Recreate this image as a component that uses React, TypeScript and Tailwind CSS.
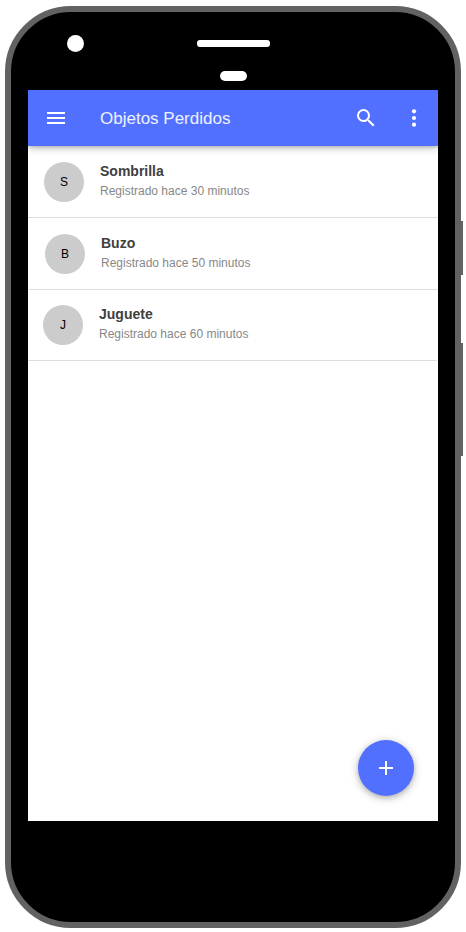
import React from "react";

interface LostItem {
  initial: string;
  name: string;
  detail: string;
  row: string;
}

const items: LostItem[] = [
  { initial: "S", name: "Sombrilla", detail: "Registrado hace 30 minutos", row: "h-[72px] pt-[15px] pl-4" },
  { initial: "B", name: "Buzo", detail: "Registrado hace 50 minutos", row: "ml-px h-[72px] pt-[15px] pl-4" },
  { initial: "J", name: "Juguete", detail: "Registrado hace 60 minutos", row: "mr-px h-[71px] pt-3.5 pl-[15px]" },
];

function AppBar() {
  return (
    <header className="z-10 flex h-14 shrink-0 items-center bg-[#5170ff] pl-4 text-white shadow-[0_2px_8px_rgba(0,0,0,0.26),0_1px_3px_rgba(0,0,0,0.14)]">
      <svg className="size-6" viewBox="0 0 24 24" fill="currentColor">
        <path d="M3 18h18v-2H3v2zm0-5h18v-2H3v2zm0-7v2h18V6H3z" />
      </svg>
      <h1 className="ml-8 flex-1 pt-0.5 text-[17px] leading-6 text-white/90">Objetos Perdidos</h1>
      <svg className="size-6" viewBox="0 0 24 24" fill="currentColor">
        <path d="M15.5 14h-.79l-.28-.27A6.47 6.47 0 0 0 16 9.5 6.5 6.5 0 1 0 9.5 16c1.61 0 3.09-.59 4.23-1.57l.27.28v.79l5 4.99L20.49 19l-4.99-5zm-6 0C7.01 14 5 11.99 5 9.5S7.01 5 9.5 5 14 7.01 14 9.5 11.99 14 9.5 14z" />
      </svg>
      <svg className="mr-3 ml-6 size-6" viewBox="0 0 24 24" fill="currentColor">
        <circle cx="12" cy="5.3" r="2.1" />
        <circle cx="12" cy="12" r="2.1" />
        <circle cx="12" cy="18.7" r="2.1" />
      </svg>
    </header>
  );
}

function ItemRow({ initial, name, detail, row }: LostItem) {
  return (
    <li className={`flex items-start border-b border-[#dddddd] ${row}`}>
      <div className="mt-px flex size-10 items-center justify-center rounded-full bg-[#cccccc] text-xs text-black">
        {initial}
      </div>
      <div className="ml-4">
        <p className="text-sm leading-5 font-bold text-[#404040]">{name}</p>
        <p className="text-xs leading-5 text-[#878787]">{detail}</p>
      </div>
    </li>
  );
}

export default function App() {
  return (
    <div className="flex h-[932px] w-[466px] overflow-hidden bg-white pt-1.5 pl-[5px] font-['Liberation_Sans',Arial,sans-serif]">
      <div className="flex h-[922px] w-[456px] shrink-0 flex-col rounded-[66px] border-[6px] border-[#636262] bg-black px-[17px]">
        <div className="flex h-[78px] shrink-0 flex-col">
          <div className="mt-[23px] flex h-[17px] items-center pl-[39px]">
            <div className="size-[17px] rounded-full bg-white" />
            <div className="ml-[113px] h-[7px] w-[73px] rounded-[3px] bg-white" />
          </div>
          <div className="mt-[19px] ml-48 h-2.5 w-[27px] rounded-full bg-white" />
        </div>
        <main className="flex h-[731px] shrink-0 flex-col bg-white">
          <AppBar />
          <ul className="flex-1">
            {items.map((item) => (
              <ItemRow key={item.name} {...item} />
            ))}
          </ul>
          <button
            aria-label="Agregar"
            className="mr-6 mb-[25px] flex size-14 items-center justify-center self-end rounded-full bg-[#5170ff] text-white shadow-[0_2px_10px_rgba(0,0,0,0.24),0_2px_4px_rgba(0,0,0,0.14)]"
          >
            <svg className="size-6" viewBox="0 0 24 24" fill="currentColor">
              <path d="M19 13h-6v6h-2v-6H5v-2h6V5h2v6h6v2z" />
            </svg>
          </button>
        </main>
      </div>
      <div className="flex w-0.5 shrink-0 flex-col">
        <div className="mt-[215px] h-[54px] bg-[#636262]" />
        <div className="mt-[68px] h-[113px] bg-[#636262]" />
      </div>
    </div>
  );
}
